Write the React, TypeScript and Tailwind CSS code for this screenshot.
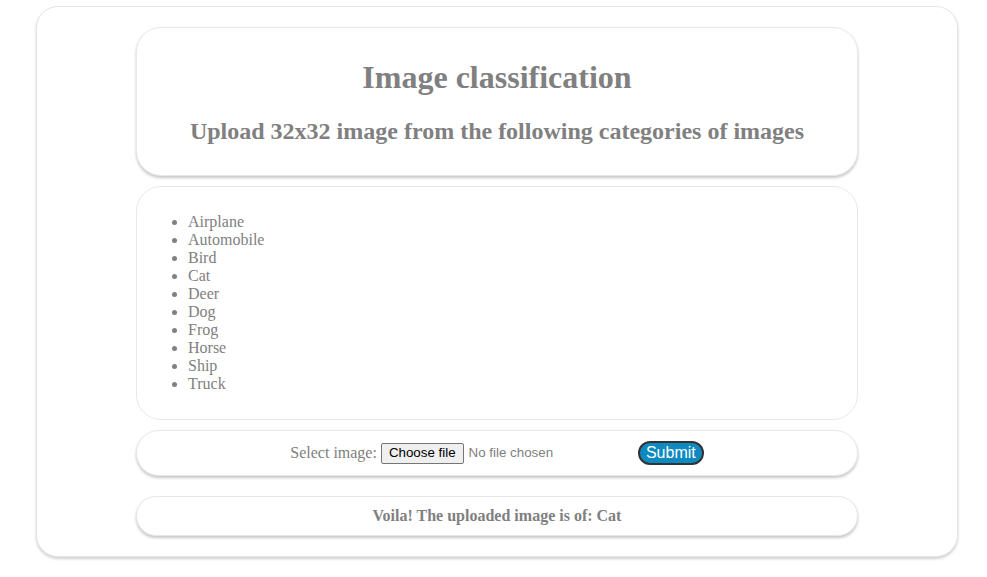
import React from 'react';

const categories = ['Airplane', 'Automobile', 'Bird', 'Cat', 'Deer', 'Dog', 'Frog', 'Horse', 'Ship', 'Truck'];

const card = 'bg-white border border-[#e8e8e8] rounded-[25px] shadow-[0_2px_3px_rgba(0,0,0,0.22)]';

const App: React.FC = () => {
  return (
    <div className="min-h-[577px] bg-white pt-[6px] pb-[20px] font-['Liberation_Serif',serif] text-[#808080]">
      <div className="ml-[36px] w-[922px] bg-white border border-[#e6e6e6] rounded-[22px] shadow-[0_2px_3px_rgba(0,0,0,0.18)] px-[99px] pt-[20px] pb-[20px] flex flex-col">
        <div className={`${card} py-[10px] text-center`}>
          <h1 className="text-[32px] leading-[37px] font-bold my-[21px]">Image classification</h1>
          <h2 className="text-[24px] leading-[28px] font-bold mb-[20px]">
            Upload 32x32 image from the following categories of images
          </h2>
        </div>

        <div className={`${card} mt-[10px] px-[11px] py-[10px] shadow-none`}>
          <ul className="list-disc pl-[40px] my-[16px] text-[16px] leading-[18px]">
            {categories.map((c) => (
              <li key={c}>{c}</li>
            ))}
          </ul>
        </div>

        <div className={`${card} mt-[10px] py-[10px] flex justify-center items-center h-[46px]`}>
          <label className="text-[16px] leading-[18px] mr-[4px]">Select image:</label>
          <div className="w-[253px] flex items-center font-['Liberation_Sans',Arial,sans-serif] text-[13.33px]">
            <span className="h-[21px] px-[7px] flex items-center border border-[#767676] bg-[#efefef] rounded-[2px] text-black">
              Choose file
            </span>
            <span className="ml-[5px]">No file chosen</span>
          </div>
          <button className="ml-[4px] h-[24px] px-[6px] rounded-full border-2 border-[#333] bg-[#0e8ac0] text-white font-['Liberation_Sans',Arial,sans-serif] text-[16px] leading-[18px]">
            Submit
          </button>
        </div>

        <div className={`${card} mt-[20px] py-[10px] text-center`}>
          <p className="text-[16px] leading-[18px] font-bold">Voila! The uploaded image is of: Cat</p>
        </div>
      </div>
    </div>
  );
};

export default App;
